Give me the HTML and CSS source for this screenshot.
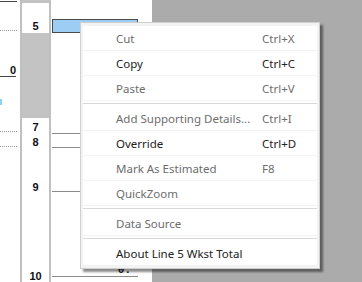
FILE: index.html
```html
<!DOCTYPE html>
<html>
<head>
<meta charset="utf-8">
<link rel="stylesheet" href="styles.css">
</head>
<body>
<div class="screen">
  <div class="col1">
    <div class="topline"></div>
    <div class="dots d1"></div>
    <div class="zero">0</div>
    <div class="sliver"></div>
    <div class="dots d2"></div>
    <div class="dots d3"></div>
  </div>
  <div class="col2">
    <div class="topgray"></div>
    <div class="num n5">5</div>
    <div class="grayblock"></div>
    <div class="num n7">7</div>
    <div class="num n8">8</div>
    <div class="num n9">9</div>
    <div class="num n10">10</div>
  </div>
  <div class="col3">
    <div class="cell"><span>0,000</span></div>
    <div class="hline l1"></div>
    <div class="hline l2"></div>
    <div class="hline l3"></div>
    <div class="val">0.</div>
    <div class="hline l4"></div>
  </div>
  <div class="col4"></div>

  <div class="menu">
    <div class="item dis"><span class="lbl">Cut</span><span class="key">Ctrl+X</span></div>
    <div class="item"><span class="lbl">Copy</span><span class="key">Ctrl+C</span></div>
    <div class="item dis"><span class="lbl">Paste</span><span class="key">Ctrl+V</span></div>
    <div class="sep"></div>
    <div class="item dis"><span class="lbl">Add Supporting Details...</span><span class="key">Ctrl+I</span></div>
    <div class="item"><span class="lbl">Override</span><span class="key">Ctrl+D</span></div>
    <div class="item dis"><span class="lbl">Mark As Estimated</span><span class="key">F8</span></div>
    <div class="item dis"><span class="lbl">QuickZoom</span><span class="key"></span></div>
    <div class="sep"></div>
    <div class="item dis"><span class="lbl">Data Source</span><span class="key"></span></div>
    <div class="sep"></div>
    <div class="item last"><span class="lbl">About Line 5 Wkst Total</span><span class="key"></span></div>
  </div>
</div>
</body>
</html>
```

FILE: styles.css
```css
html, body {
  margin: 0;
  padding: 0;
}
body {
  width: 362px;
  height: 282px;
  overflow: hidden;
  background: #ffffff;
  font-family: "Noto Sans", "Open Sans", sans-serif;
}
.screen {
  position: relative;
  display: flex;
  width: 362px;
  height: 282px;
}
.col1 {
  width: 20px;
  flex: none;
  display: flex;
  flex-direction: column;
}
.topline {
  margin-top: 1px;
  width: 17px;
  height: 1px;
  background: #444;
}
.dots {
  width: 17px;
  height: 0;
  border-top: 1px dotted #9a9a9a;
}
.d1 { margin-top: 28px; }
.zero {
  margin-top: 33px;
  width: 16px;
  height: 12px;
  text-align: right;
  font-family: "Liberation Sans", Arial, sans-serif;
  font-weight: bold;
  font-size: 11px;
  line-height: 12px;
  color: #111;
  border-bottom: 1px solid #444;
}
.sliver {
  margin-top: 22px;
  width: 2px;
  height: 6px;
  background: #8fd0f5;
}
.d2 { margin-top: 26px; }
.d3 { margin-top: 14px; }

.col2 {
  width: 27px;
  flex: none;
  border-left: 2px solid #c0c0c0;
  border-right: 2px solid #c0c0c0;
  display: flex;
  flex-direction: column;
  align-items: center;
}
.topgray {
  width: 100%;
  height: 3px;
  background: #c3c3c3;
}
.num {
  font-family: "Liberation Sans", Arial, sans-serif;
  font-weight: bold;
  font-size: 11px;
  line-height: 12px;
  height: 12px;
  color: #10101a;
}
.n5 { margin-top: 17px; }
.grayblock {
  margin-top: 1px;
  width: 100%;
  height: 86px;
  background: #c3c3c3;
}
.n7 { margin-top: 3px; }
.n8 { margin-top: 3px; }
.n9 { margin-top: 33px; }
.n10 { margin-top: 77px; }

.col3 {
  width: 101px;
  flex: none;
  display: flex;
  flex-direction: column;
}
.cell {
  margin-top: 19px;
  margin-left: 1px;
  width: 84px;
  height: 12px;
  background: #9dcdf3;
  border: 1px solid #4a4a4a;
  font-family: "Liberation Mono", monospace;
  font-size: 11px;
  line-height: 12px;
  text-align: right;
  color: #222;
}
.cell span { padding-right: 14px; }
.hline {
  margin-left: 1px;
  height: 1px;
  background: #8a8a8a;
}
.l1 { margin-top: 100px; width: 28px; }
.l2 { margin-top: 13px; width: 28px; }
.l3 { margin-top: 43px; width: 28px; }
.val {
  margin-top: 74px;
  width: 80px;
  text-align: right;
  font-family: "Liberation Mono", monospace;
  font-weight: bold;
  font-size: 11px;
  line-height: 9px;
  height: 9px;
  color: #222;
}
.l4 { margin-top: 1px; width: 86px; }

.col4 {
  flex: 1;
  background: #ababab;
}

.menu {
  position: absolute;
  left: 80px;
  top: 22px;
  width: 238px;
  padding: 3px 0 2px 0;
  background: #f3f3f3;
  border: 1px solid #cfcfcf;
  box-shadow: 3px 3px 2px rgba(0, 0, 0, 0.45);
  display: flex;
  flex-direction: column;
}
.item {
  display: flex;
  align-items: center;
  height: 24px;
  margin: 0 2px 1px 2px;
  background: #ffffff;
  font-size: 11.5px;
  color: #222;
}
.item.dis { color: #6d6d6d; }
.lbl {
  padding-left: 33px;
  width: 146px;
  white-space: nowrap;
}
.key {
  white-space: nowrap;
}
.sep {
  height: 5px;
  margin: 0 2px;
  background: linear-gradient(to bottom, #ffffff 0, #ffffff 2px, #d9d9d9 2px, #d9d9d9 3px, #ffffff 3px);
}
```
